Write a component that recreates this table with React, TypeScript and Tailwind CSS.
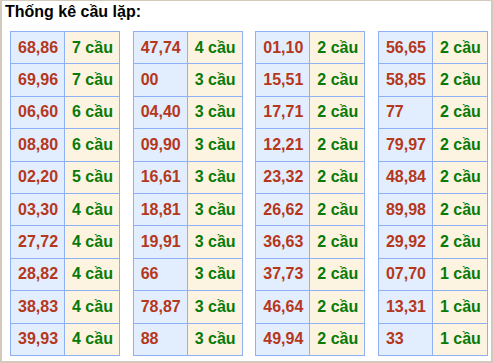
import React from "react";

const data: [string, string][][] = [
  [
    ["68,86", "7 cầu"], ["69,96", "7 cầu"], ["06,60", "6 cầu"], ["08,80", "6 cầu"], ["02,20", "5 cầu"],
    ["03,30", "4 cầu"], ["27,72", "4 cầu"], ["28,82", "4 cầu"], ["38,83", "4 cầu"], ["39,93", "4 cầu"],
  ],
  [
    ["47,74", "4 cầu"], ["00", "3 cầu"], ["04,40", "3 cầu"], ["09,90", "3 cầu"], ["16,61", "3 cầu"],
    ["18,81", "3 cầu"], ["19,91", "3 cầu"], ["66", "3 cầu"], ["78,87", "3 cầu"], ["88", "3 cầu"],
  ],
  [
    ["01,10", "2 cầu"], ["15,51", "2 cầu"], ["17,71", "2 cầu"], ["12,21", "2 cầu"], ["23,32", "2 cầu"],
    ["26,62", "2 cầu"], ["36,63", "2 cầu"], ["37,73", "2 cầu"], ["46,64", "2 cầu"], ["49,94", "2 cầu"],
  ],
  [
    ["56,65", "2 cầu"], ["58,85", "2 cầu"], ["77", "2 cầu"], ["79,97", "2 cầu"], ["48,84", "2 cầu"],
    ["89,98", "2 cầu"], ["29,92", "2 cầu"], ["07,70", "1 cầu"], ["13,31", "1 cầu"], ["33", "1 cầu"],
  ],
];

export default function App() {
  return (
    <div
      className="w-[493px] h-[363px] box-border bg-white border-x-2 border-b-2 border-t border-[#d3cabc] flex flex-col"
      style={{ fontFamily: '"Liberation Sans", Arial, sans-serif' }}
    >
      <div className="pl-[3px] pt-[2px] h-[30px] text-[16px] font-bold text-black leading-[18px]">
        Thống kê cầu lặp:
      </div>
      <div className="flex justify-between pl-[8px] pr-[3px]">
        {data.map((tbl, ti) => (
          <div
            key={ti}
            className="w-[110px] h-[325px] grid grid-cols-[54px_55px] grid-rows-10 border-l border-t border-[#8fb0f5]"
          >
            {tbl.map(([n, c], ri) => (
              <React.Fragment key={ri}>
                <div className="bg-[#e2eefd] border-r border-b border-[#8fb0f5] flex items-center pl-[7px] text-[16px] font-bold text-[#b5371c]">
                  {n}
                </div>
                <div className="bg-[#fdf3e1] border-r border-b border-[#8fb0f5] flex items-center pl-[7px] text-[16px] font-bold text-[#087a08]">
                  {c}
                </div>
              </React.Fragment>
            ))}
          </div>
        ))}
      </div>
    </div>
  );
}
